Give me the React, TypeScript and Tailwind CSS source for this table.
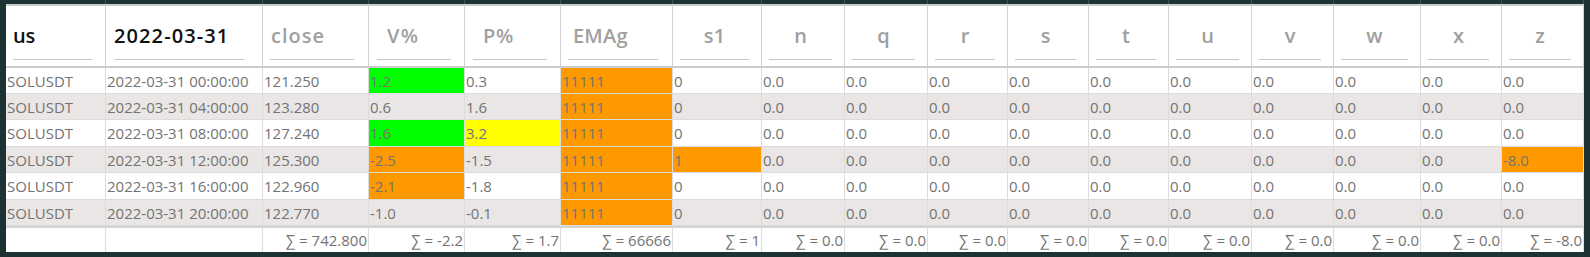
import React from "react";

type Col = {
  key: string;
  w: string;
  title: string;
  dark?: boolean;
  hp: string;
  tp: string;
  tr: string;
  center?: boolean;
  sum: string;
};

const cols: Col[] = [
  { key: "us", w: "w-[100px]", title: "us", dark: true, hp: "pl-[7px] pr-[13px]", tp: "", tr: "tracking-[-0.3px]", sum: "" },
  { key: "date", w: "w-[157px]", title: "2022-03-31", dark: true, hp: "pl-[8px] pr-[18px]", tp: "", tr: "tracking-[1.1px]", sum: "" },
  { key: "close", w: "w-[106px]", title: "close", hp: "pl-[7px] pr-[14px]", tp: "pl-[1px]", tr: "tracking-[1px]", sum: "742.800" },
  { key: "v", w: "w-[96px]", title: "V%", hp: "pl-[8px] pr-[13px]", tp: "pl-[10px]", tr: "tracking-[1.2px]", sum: "-2.2" },
  { key: "p", w: "w-[96px]", title: "P%", hp: "pl-[8px] pr-[13px]", tp: "pl-[10px]", tr: "tracking-[0.6px]", sum: "1.7" },
  { key: "ema", w: "w-[112px]", title: "EMAg", hp: "pl-[7px] pr-[14px]", tp: "pl-[5px]", tr: "tracking-[0.2px]", sum: "66666" },
  { key: "s1", w: "w-[89px]", title: "s1", hp: "pl-[7px] pr-[12px]", tp: "", tr: "tracking-[0.2px]", center: true, sum: "1" },
  { key: "n", w: "w-[83px]", title: "n", hp: "pl-[7px] pr-[12px]", tp: "", tr: "", center: true, sum: "0.0" },
  { key: "q", w: "w-[83px]", title: "q", hp: "pl-[7px] pr-[12px]", tp: "", tr: "", center: true, sum: "0.0" },
  { key: "r", w: "w-[80px]", title: "r", hp: "pl-[7px] pr-[12px]", tp: "", tr: "", center: true, sum: "0.0" },
  { key: "s", w: "w-[81px]", title: "s", hp: "pl-[7px] pr-[12px]", tp: "", tr: "", center: true, sum: "0.0" },
  { key: "t", w: "w-[80px]", title: "t", hp: "pl-[7px] pr-[12px]", tp: "", tr: "", center: true, sum: "0.0" },
  { key: "u", w: "w-[83px]", title: "u", hp: "pl-[7px] pr-[12px]", tp: "", tr: "", center: true, sum: "0.0" },
  { key: "vv", w: "w-[82px]", title: "v", hp: "pl-[7px] pr-[12px]", tp: "", tr: "", center: true, sum: "0.0" },
  { key: "w", w: "w-[87px]", title: "w", hp: "pl-[7px] pr-[12px]", tp: "", tr: "", center: true, sum: "0.0" },
  { key: "x", w: "w-[81px]", title: "x", hp: "pl-[7px] pr-[12px]", tp: "", tr: "", center: true, sum: "0.0" },
  { key: "z", w: "w-[82px]", title: "z", hp: "pl-[7px] pr-[12px]", tp: "", tr: "", center: true, sum: "-8.0" },
];

type Cell = { v: string; bg?: string };

const G = "bg-[#00ff00]";
const O = "bg-[#ff9900]";
const Y = "bg-[#ffff00]";

const zeros = (n: number, last?: Cell): Cell[] => {
  const arr: Cell[] = [];
  for (let i = 0; i < n; i++) arr.push({ v: "0.0" });
  if (last) arr[n - 1] = last;
  return arr;
};

const rows: Cell[][] = [
  [{ v: "SOLUSDT" }, { v: "2022-03-31 00:00:00" }, { v: "121.250" }, { v: "1.2", bg: G }, { v: "0.3" }, { v: "11111", bg: O }, { v: "0" }, ...zeros(10)],
  [{ v: "SOLUSDT" }, { v: "2022-03-31 04:00:00" }, { v: "123.280" }, { v: "0.6" }, { v: "1.6" }, { v: "11111", bg: O }, { v: "0" }, ...zeros(10)],
  [{ v: "SOLUSDT" }, { v: "2022-03-31 08:00:00" }, { v: "127.240" }, { v: "1.6", bg: G }, { v: "3.2", bg: Y }, { v: "11111", bg: O }, { v: "0" }, ...zeros(10)],
  [{ v: "SOLUSDT" }, { v: "2022-03-31 12:00:00" }, { v: "125.300" }, { v: "-2.5", bg: O }, { v: "-1.5" }, { v: "11111", bg: O }, { v: "1", bg: O }, ...zeros(10, { v: "-8.0", bg: O })],
  [{ v: "SOLUSDT" }, { v: "2022-03-31 16:00:00" }, { v: "122.960" }, { v: "-2.1", bg: O }, { v: "-1.8" }, { v: "11111", bg: O }, { v: "0" }, ...zeros(10)],
  [{ v: "SOLUSDT" }, { v: "2022-03-31 20:00:00" }, { v: "122.770" }, { v: "-1.0" }, { v: "-0.1" }, { v: "11111", bg: O }, { v: "0" }, ...zeros(10)],
];

const rowH = ["h-[26px]", "h-[26px]", "h-[27px]", "h-[26px]", "h-[27px]", "h-[26px]"];

const font = { fontFamily: '"Open Sans", "Liberation Sans", sans-serif' };

export default function App() {
  return (
    <div className="w-[1590px] h-[257px] bg-[#1d3232] px-[6px] pb-[5px] flex flex-col" style={font}>
      {/* top band */}
      <div className="flex h-[4px] shrink-0">
        {cols.map((c) => (
          <div key={c.key} className={`${c.w} h-full border-r border-[#3e5252]`} />
        ))}
      </div>
      {/* header */}
      <div className="flex h-[64px] shrink-0 bg-white border-t-2 border-b-2 border-[#cccccc]">
        {cols.map((c) => (
          <div key={c.key} className={`${c.w} h-full border-r border-[#d2d2d2] flex flex-col pt-[17px] ${c.hp}`}>
            <div
              className={`h-[25px] leading-[25px] text-[20px] font-semibold whitespace-nowrap ${c.tp} ${c.tr} ${c.center ? "text-center" : ""} ${
                c.dark ? "text-[#111111]" : "text-[#a0a0a0]"
              }`}
            >
              {c.title}
            </div>
            <div className="mt-[11px] h-px bg-[#c6c6c6]" />
          </div>
        ))}
      </div>
      {/* rows */}
      {rows.map((r, ri) => (
        <div key={ri} className={`flex ${rowH[ri]} shrink-0 ${ri % 2 === 1 ? "bg-[#e9e6e5]" : "bg-white"}`}>
          {r.map((cell, ci) => (
            <div
              key={ci}
              className={`${cols[ci].w} h-full border-r border-b border-[#dcdcdc] pl-px pt-px flex items-center text-[15px] text-[#737373] whitespace-nowrap overflow-hidden ${
                cell.bg ?? ""
              }`}
            >
              {cell.v}
            </div>
          ))}
        </div>
      ))}
      {/* footer */}
      <div className="flex h-[26px] shrink-0 bg-white border-t-2 border-[#d4d4d4]">
        {cols.map((c) => (
          <div
            key={c.key}
            className={`${c.w} h-full border-r border-[#dcdcdc] pr-px flex items-center justify-end text-[15px] text-[#737373] whitespace-nowrap`}
          >
            {c.sum ? `∑ = ${c.sum}` : ""}
          </div>
        ))}
      </div>
    </div>
  );
}
